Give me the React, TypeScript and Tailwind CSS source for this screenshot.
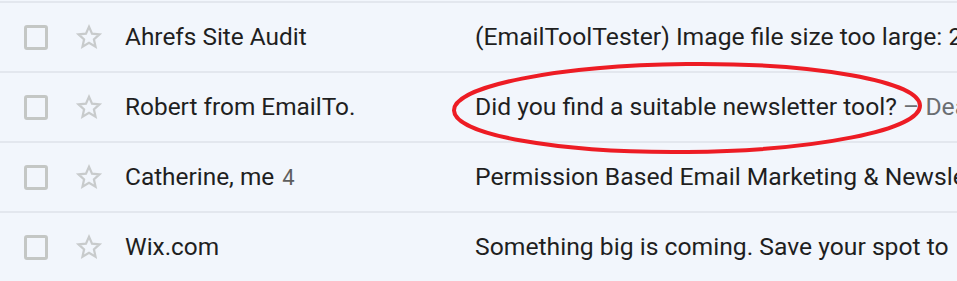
import React from "react";

const rows = [
  { sender: "Ahrefs Site Audit", count: "", subject: "(EmailToolTester) Image file size too large: 2", snippet: "" },
  { sender: "Robert from EmailTo.", count: "", subject: "Did you find a suitable newsletter tool?", snippet: " – Dear Sir" },
  { sender: "Catherine, me", count: "4", subject: "Permission Based Email Marketing & Newsletter", snippet: "" },
  { sender: "Wix.com", count: "", subject: "Something big is coming. Save your spot to", snippet: "" },
];

function Star() {
  return (
    <svg width="28" height="28" viewBox="0 0 24 24" className="shrink-0">
      <path
        d="M12 3.2l2.6 5.9 6.4.6-4.8 4.3 1.4 6.3L12 17l-5.6 3.3 1.4-6.3L3 9.7l6.4-.6z"
        fill="none"
        stroke="#c8cbcc"
        strokeWidth="1.9"
        strokeLinejoin="miter"
      />
    </svg>
  );
}

export default function App() {
  return (
    <div className="relative w-[957px] h-[281px] overflow-hidden bg-[#f2f6fc]" style={{ fontFamily: "Roboto, 'Liberation Sans', sans-serif" }}>
      <div className="h-[1px]" />
      {rows.map((r, i) => (
        <div key={i} className="flex items-center h-[70px] border-t-2 border-[#e3e7ee] whitespace-nowrap">
          <div className="ml-[24px] w-[24px] h-[25px] border-[3px] border-[#c4c7c5] rounded-[3px] shrink-0" />
          <div className="ml-[27px] shrink-0"><Star /></div>
          <div className="ml-[22px] w-[350px] shrink-0 text-[24.4px] text-[#1f1f1f]">
            {r.sender}
            {r.count && <span className="text-[#5e5e5e] text-[22px] ml-[8px]">{r.count}</span>}
          </div>
          <div className="text-[24.7px] text-[#1f1f1f] overflow-hidden">
            {r.subject}
            {r.snippet && <span className="text-[#6b6e72]">{r.snippet}</span>}
          </div>
        </div>
      ))}
      <svg className="absolute left-0 top-0 pointer-events-none" width="957" height="281">
        <ellipse cx="687" cy="108" rx="233" ry="44" fill="none" stroke="#ed1c24" strokeWidth="4" transform="rotate(-0.6 687 108)" />
      </svg>
    </div>
  );
}
